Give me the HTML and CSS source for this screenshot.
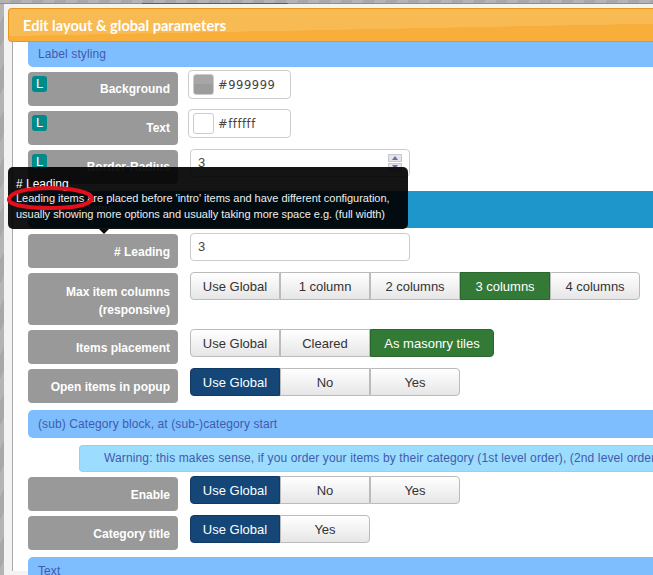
FILE: index.html
```html
<!DOCTYPE html>
<html lang="en">
<head>
<meta charset="utf-8">
<title>Edit layout &amp; global parameters</title>
<link rel="stylesheet" href="styles.css">
</head>
<body>
<div class="page">
  <div class="top-strip"><span class="peek"></span></div>
  <main class="modal">
    <h1 class="modal-title">Edit layout &amp; global parameters</h1>
    <div class="modal-body">
      <div class="section section-first">Label styling</div>

      <div class="row">
        <div class="label"><span class="badge">L</span>Background</div>
        <div class="color-input"><span class="swatch swatch-grey"></span>#999999</div>
      </div>
      <div class="row">
        <div class="label"><span class="badge">L</span>Text</div>
        <div class="color-input"><span class="swatch swatch-white"></span>#ffffff</div>
      </div>
      <div class="row">
        <div class="label"><span class="badge">L</span>Border-Radius</div>
        <div class="text-input">3
          <span class="spinner"><span class="spin spin-up"></span><span class="spin spin-down"></span></span>
        </div>
      </div>

      <div class="section section-dark">Leading items</div>

      <div class="row">
        <div class="label"># Leading</div>
        <div class="text-input">3</div>
      </div>
      <div class="row">
        <div class="label label-tall">Max item columns<br>(responsive)</div>
        <div class="btn-group">
          <span class="btn">Use Global</span><span class="btn">1 column</span><span class="btn">2 columns</span><span class="btn btn-green">3 columns</span><span class="btn">4 columns</span>
        </div>
      </div>
      <div class="row">
        <div class="label">Items placement</div>
        <div class="btn-group">
          <span class="btn">Use Global</span><span class="btn">Cleared</span><span class="btn btn-green btn-wide">As masonry tiles</span>
        </div>
      </div>
      <div class="row">
        <div class="label">Open items in popup</div>
        <div class="btn-group">
          <span class="btn btn-navy">Use Global</span><span class="btn">No</span><span class="btn">Yes</span>
        </div>
      </div>

      <div class="section section-tall">(sub) Category block, at (sub-)category start</div>
      <div class="warning">Warning: this makes sense, if you order your items by their category (1st level order), (2nd level order</div>

      <div class="row">
        <div class="label">Enable</div>
        <div class="btn-group">
          <span class="btn btn-navy">Use Global</span><span class="btn">No</span><span class="btn">Yes</span>
        </div>
      </div>
      <div class="row">
        <div class="label">Category title</div>
        <div class="btn-group">
          <span class="btn btn-navy">Use Global</span><span class="btn">Yes</span>
        </div>
      </div>

      <div class="section section-tall section-last">Text</div>
    </div>
  </main>

  <div class="tooltip">
    <div class="tooltip-title"># Leading</div>
    <div class="tooltip-text">Leading items are placed before 'intro' items and have different configuration,<br>usually showing more options and usually taking more space e.g. (full width)</div>
  </div>
  <svg class="red-mark" width="92" height="26" viewBox="0 0 92 26" aria-hidden="true">
    <path d="M4 14 C6 7 22 3 44 3 C66 3 86 7 87 13 C87 19 72 23 46 23 C22 23 3 20 4 14 Z" fill="none" stroke="#e3101c" stroke-width="4"/>
  </svg>
</div>
</body>
</html>
```
FILE: styles.css
```css
* { box-sizing: border-box; }
html, body { margin: 0; padding: 0; height: 100%; overflow: hidden; }
body {
  font-family: "Liberation Sans", Arial, sans-serif;
  font-size: 12px;
  background: #fff;
}
.page {
  position: relative;
  width: 653px;
  height: 575px;
  overflow: hidden;
  background: repeating-linear-gradient(115deg, #b4b4b4 0 10px, #a8a8a8 10px 20px);
}
.top-strip { height: 4px; position: relative; border-bottom: 1px solid #8f8f8f; }
.peek {
  display: block;
  position: absolute;
  left: 142px;
  top: 3px;
  width: 146px;
  height: 1px;
  background: #4a6b4a;
}
.modal {
  margin-left: 4px;
  height: 571px;
  padding: 4px 0 0 4px;
  background: #f3f3f3;
}
.modal-title {
  margin: 0;
  height: 34px;
  padding: 0 0 0 14px;
  line-height: 34px;
  font-family: Lato, sans-serif;
  font-weight: 700;
  font-size: 14.6px;
  color: #fff;
  border: 1px solid #e8951c;
  border-right: 0;
  border-radius: 4px 0 0 4px;
  background: linear-gradient(178.9deg, #f8ba52 0, #f8ba52 60.5%, #f8ae3a 61.5%, #f8ae3a 100%);
}
.modal-body {
  margin-left: 4px;
  padding-left: 15px;
  height: 529px;
  border-left: 1px solid #a9a9a9;
  background: #fff;
}
.section {
  height: 25px;
  line-height: 24px;
  padding-left: 10px;
  color: #3f5bad;
  font-size: 12px;
  letter-spacing: .1px;
  background: #7fbefe;
  border-radius: 5px 0 0 5px;
  white-space: nowrap;
}
.section-first { border-radius: 0 0 0 5px; }
.section-dark {
  height: 37px;
  margin-top: 7px;
  line-height: 36px;
  color: #fff;
  background: #1f96cb;
}
.section-tall { height: 28px; line-height: 28px; margin-top: 7px; }
.row {
  display: flex;
  align-items: flex-start;
  gap: 12px;
  margin-top: 5px;
}
.section-dark + .row { margin-top: 6px; }
.label {
  position: relative;
  flex: none;
  width: 150px;
  min-height: 34px;
  padding: 10px 8px 0 0;
  border-radius: 4px;
  background: #999;
  color: #fff;
  font-weight: 700;
  font-size: 12px;
  line-height: 14px;
  text-align: right;
}
.section-dark ~ .row .label { padding-top: 11px; }
.section-dark ~ .row .label-tall { height: 52px; padding-top: 10px; line-height: 18px; }
.badge {
  position: absolute;
  left: 4px;
  top: 4px;
  width: 15px;
  height: 16px;
  line-height: 15px;
  border-radius: 3px;
  background: #008b8b;
  color: #fff;
  font-weight: 400;
  font-size: 13px;
  text-align: center;
}
.color-input {
  flex: none;
  display: flex;
  align-items: center;
  gap: 4px;
  width: 103px;
  height: 29px;
  margin: -2px 0 0 -2px;
  padding-left: 4px;
  border: 1px solid #ccc;
  border-radius: 4px;
  background: #fff;
  color: #444;
  letter-spacing: .55px;
  font-family: "DejaVu Sans", sans-serif;
  font-size: 11.5px;
}
.swatch {
  flex: none;
  width: 21px;
  height: 21px;
  border-radius: 3px;
  border: 1px solid #ccc;
}
.swatch-grey { background: linear-gradient(#a6a6a6 50%, #9c9c9c 50%); }
.swatch-white { background: #fff; }
.text-input {
  position: relative;
  flex: none;
  width: 220px;
  height: 28px;
  margin-top: -1px;
  padding-left: 7px;
  line-height: 26px;
  border: 1px solid #ccc;
  border-radius: 4px;
  background: #fff;
  color: #444;
  font-size: 13px;
}
.spinner {
  position: absolute;
  right: 7px;
  top: 4px;
  display: flex;
  flex-direction: column;
  gap: 1px;
}
.spin { display: block; width: 14px; height: 8px; background: #e4e4ea; position: relative; border: 1px solid #c8c8c8; }
.spin::after {
  content: "";
  position: absolute;
  left: 3px;
  border-left: 3px solid transparent;
  border-right: 3px solid transparent;
}
.spin-up::after { top: 1px; border-bottom: 4px solid #5f6fb0; }
.spin-down::after { top: 1px; border-top: 4px solid #5f6fb0; }
.btn-group { display: flex; margin-top: -1px; flex: none; }
.btn {
  display: block;
  width: 90px;
  height: 28px;
  line-height: 28px;
  text-align: center;
  font-size: 13px;
  color: #333;
  background: linear-gradient(#fff, #e6e6e6);
  border: 1px solid #bbb;
}
.btn:first-child { border-radius: 4px 0 0 4px; }
.btn:last-child { border-radius: 0 4px 4px 0; }
.btn-green {
  background: #337a37;
  border-color: #2a662d;
  color: #fff;
}
.btn-wide { width: 124px; }
.btn-navy {
  background: #144778;
  border-color: #103a63;
  color: #fff;
}
.warning {
  height: 27px;
  margin: 7px 0 0 51px;
  padding-left: 24px;
  line-height: 25px;
  white-space: nowrap;
  overflow: hidden;
  border: 1px solid #8fd2f5;
  border-right: 0;
  border-radius: 4px 0 0 4px;
  background: #9cdcfe;
  color: #3f5bad;
  font-size: 12px;
  letter-spacing: .13px;
}
.tooltip {
  position: absolute;
  left: 8px;
  top: 167px;
  width: 400px;
  height: 62px;
  padding: 10px 8px 0;
  border-radius: 5px;
  background: rgba(0, 0, 0, .92);
  color: #fff;
  font-size: 11px;
  line-height: 16px;
  white-space: nowrap;
}
.tooltip::after {
  content: "";
  position: absolute;
  left: 91px;
  top: 100%;
  border: 5px solid transparent;
  border-bottom: 0;
  border-top-color: #0a0a0a;
}
.tooltip-title { line-height: 15px; font-size: 12px; }
.tooltip-text { margin-top: -2px; color: #eee; letter-spacing: -.02px; }
.red-mark { position: absolute; left: 5px; top: 185px; }
```
